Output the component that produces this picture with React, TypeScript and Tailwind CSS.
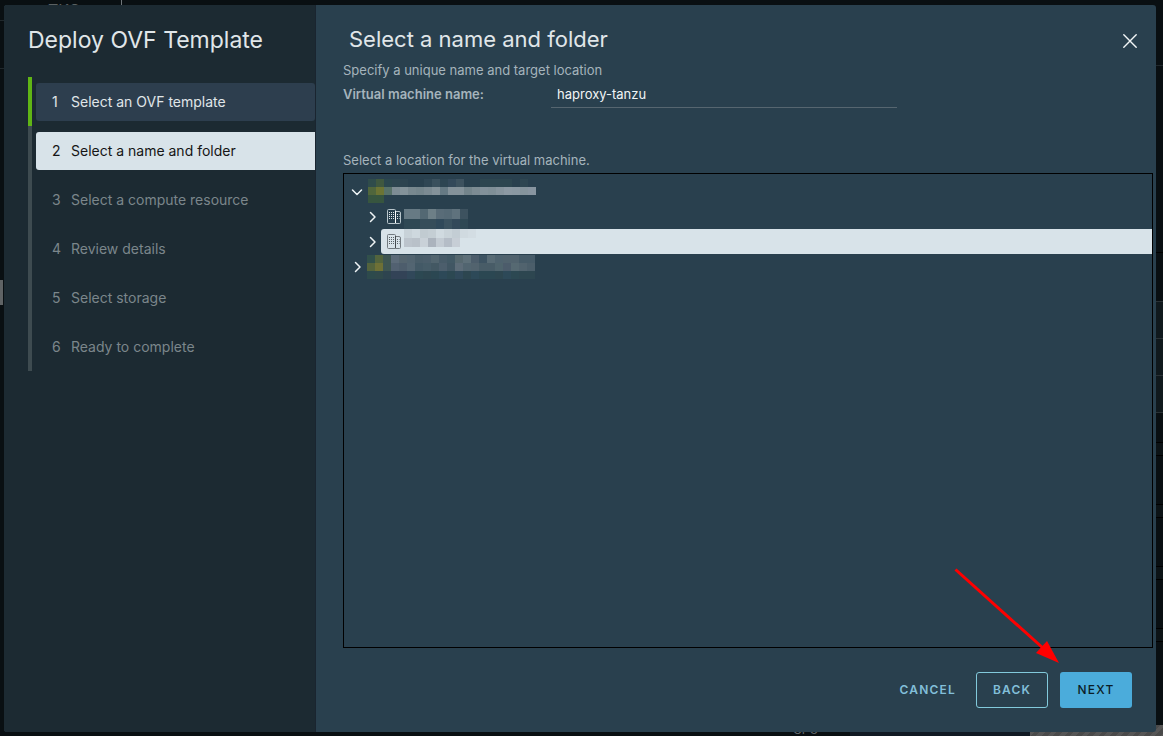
import { useState } from 'react';
import clsx from 'clsx';

const steps = [
  'Select an OVF template',
  'Select a name and folder',
  'Select a compute resource',
  'Review details',
  'Select storage',
  'Ready to complete',
];

const CURRENT = 1;

interface MosaicProps {
  /** Cell colours per row, '' leaves the cell empty */
  rows: string[][];
  cellHeight: number;
  className?: string;
}

/** Redacted label, drawn as a grid of flat cells */
function Mosaic({ rows, cellHeight, className }: MosaicProps) {
  const width = Math.max(...rows.map((r) => r.length)) * 8;
  const height = rows.length * cellHeight;
  return (
    <svg
      width={width}
      height={height}
      viewBox={`0 0 ${width} ${height}`}
      shapeRendering="crispEdges"
      className={clsx('shrink-0', className)}
      aria-hidden="true"
    >
      {rows.map((row, y) =>
        row.map((fill, x) =>
          fill ? <rect key={`${x}-${y}`} x={x * 8} y={y * cellHeight} width={8} height={cellHeight} fill={fill} /> : null,
        ),
      )}
    </svg>
  );
}

const vcenterOne = [
  ['#2f4c4b', '#3f583f', '#2b474e', '#2d4550', '#2d4450', '', '', '#2f4654', '#3a505d', '#2d4552', '#33495a', '#3d525f', '', '', '#2d4650', '#2d4650', '#2d4650', '#2d4650', '', '#2e4651'],
  ['#50663c', '#6c7434', '#577168', '#7d8c94', '#84939a', '#78888f', '#74858c', '#7b8a92', '#84929a', '#667a84', '#84929a', '#84929a', '#73848b', '#7c8b93', '#82919a', '#7f8f97', '#86949d', '#8c99a3', '#8a98a2', '#85949c', '#8895a0'],
  ['#37553f', '#37553f'],
];

const datacenterOne = [
  ['#677a84', '#677a84', '#536873', '#6d7f87', '#596c78', '#566a76', '#5f727d', '#3d525f'],
  ['#2f4854', '#2f4854', '#364d5a', '#364d5a', '#30495a', '#3b5260', '#33495a', '#2f4854'],
];

const datacenterTwo = [
  ['#c8d2d8', '#ced8de', '#c1cbd1', '#c4ced4', '#d0dae0', '#c9d3d9', '#c3cdd4', '#d0dae0', '#d3dde3'],
  ['#bcc4cc', '#b9c1c9', '#c9d1d8', '#abb3bd', '#c3cbd3', '#b5bdc7', '#c7ced6'],
];

const vcenterTwo = [
  ['#31504b', '#53643d', '#3e5552', '#5c6b79', '#55656f', '#526470', '#495d69', '#4b5e6b', '#52656f', '#475b68', '#425965', '#56686f', '#5e7079', '#4c5d6b', '#3d5362', '#586b75', '#4f636f', '#51636e', '#51636e', '#465b68', '#465b68'],
  ['#53633d', '#6e7036', '#3e5552', '#526171', '#4d5d6c', '#536572', '#435966', '#465c68', '#435863', '#4c5e6c', '#415663', '#5d6c78', '#526570', '#52636e', '#485c67', '#485c67', '#4f646d', '#4c5c6b', '#566972', '#51636e', '#4b5e6a'],
  ['#2d4a4c', '#30494b', '#2e444f', '#334357', '#334357', '#31485a', '#2c4852', '#2d4650', '#2b4752', '#2d4958', '#2c4852', '#30495a', '#2d4650', '#2d4958', '#2b4752', '#2b4752', '#2d4650', '#2d4958', '#2c4852', '#2d4650', '#2d4650'],
];

function Chevron({ open }: { open?: boolean }) {
  return (
    <svg width="12" height="12" viewBox="0 0 12 12" fill="none" stroke="#eef3f5" strokeWidth="1.5" strokeLinecap="round" strokeLinejoin="round">
      <path d={open ? 'M1.5 4 6 8.5 10.5 4' : 'M4.5 1.5 9 6 4.500 10.500'} />
    </svg>
  );
}

function DatacenterIcon({ selected }: { selected?: boolean }) {
  const line = selected ? '#737b80' : '#b9c6cc';
  return (
    <svg width="14" height="15" viewBox="0 0 14 15" fill="none" className="shrink-0">
      <path d="M8.5 14.5H1.5a1 1 0 0 1-1-1v-12a1 1 0 0 1 1-1h6a1 1 0 0 1 1 1zM8.5 2.5h3.500a1.500 1.500 0 0 1 1.500 1.500v9.500a1 1 0 0 1-1 1h-4" stroke={line} />
      <path d="M8.500 2v12" stroke={selected ? '#454b4f' : '#ffffff'} />
      <path
        d="M2 3.500h1m1 0h1m1 0h1M2 5.500h1m1 0h1m1 0h1M2 7.500h1m1 0h1m1 0h1M2 9.500h1m1 0h1m1 0h1M10 5.500h1m1 0h.5M10 7.500h1m1 0h.5M10 9.500h1m1 0h.5"
        stroke={selected ? '#5a6267' : '#e3eaed'}
      />
    </svg>
  );
}

function Backdrop() {
  return (
    <div className="absolute inset-0 overflow-hidden bg-[#090f12]" aria-hidden="true">
      <span className="absolute top-0 left-12 text-base leading-5 text-[#5a6062]">TKG</span>
      <span className="absolute top-0 left-[121px] h-2 w-px bg-[#70767a]" />
      <span className="absolute top-5 left-0 h-px w-1 bg-[#20282c]" />
      <span className="absolute top-[68px] left-0 h-px w-1 bg-[#20282c]" />
      <span className="absolute top-[280px] left-0 h-[25px] w-[3px] bg-[#5f6365]" />
      <span className="absolute top-[65px] right-0 h-px w-2 bg-[#20282c]" />
      <span className="absolute top-[252px] right-0 h-px w-2 bg-black" />
      <span className="absolute top-[301px] right-0 h-28 w-2 border-y border-[#2a3236] bg-[#10191d]" />
      <span className="absolute top-[338px] right-0 h-[38px] w-2 border-y border-[#2a3236]" />
      {['top-[442px]', 'top-[504px]', 'top-[566px]', 'top-[628px]'].map((top) => (
        <span key={top} className={clsx('absolute right-0 h-3.5 w-2 border-y border-black bg-[#0c1316]', top)} />
      ))}
      <span className="absolute right-[133px] bottom-0 h-2 w-[180px] bg-[#111a23]" />
      <span className="absolute bottom-0 left-[793px] text-xs leading-3 text-[#62676a]">CPU</span>
      <span className="absolute right-0 bottom-0 h-[11px] w-[133px] bg-[repeating-linear-gradient(135deg,#4a4a4a_0_4px,#565656_4px_8px)]" />
    </div>
  );
}

function Sidebar() {
  return (
    <aside className="w-[312px] shrink-0 border-r border-[#1a2530] bg-[#1c2a32] pt-[19px] pl-6">
      <h1 className="text-[23px] leading-8 text-[#e0e6e9]">Deploy OVF Template</h1>
      <ol className="mt-[21px]">
        {steps.map((step, i) => (
          <li
            key={step}
            className={clsx('border-l-4 pt-1.5 pb-[5px] pl-1', i < CURRENT ? 'border-[#60b515]' : 'border-[#3e4b50]')}
          >
            <button
              type="button"
              disabled={i > CURRENT}
              aria-current={i === CURRENT ? 'step' : undefined}
              className={clsx(
                'flex h-[38px] w-full items-center rounded-l-[3px] pl-4 text-left text-sm',
                i < CURRENT && 'rounded-r-[3px] bg-[#2d3e4e] text-[#e0e6e9]',
                i === CURRENT && 'bg-[#d8e3e9] text-[#151515]',
                i > CURRENT && 'text-[#7b868b]',
              )}
            >
              <span className="w-[19px]">{i + 1}</span>
              {step}
            </button>
          </li>
        ))}
      </ol>
    </aside>
  );
}

function LocationTree() {
  return (
    <ul role="tree" aria-label="Location" className="mr-[3px] flex-1 border border-black pt-[5px]">
      <li role="treeitem" aria-expanded="true">
        <div className="flex h-[25px] items-center pl-[7px]">
          <button type="button" aria-label="Collapse"><Chevron open /></button>
          <Mosaic rows={vcenterOne} cellHeight={8} className="ml-[5px] self-start" />
        </div>
        <ul role="group" className="pl-[22px]">
          <li role="treeitem" aria-expanded="false" className="flex h-[25px] items-center">
            <button type="button" aria-label="Expand"><Chevron /></button>
            <div className="ml-[3px] flex h-full flex-1 items-center pl-1.5">
              <DatacenterIcon />
              <Mosaic rows={datacenterOne} cellHeight={10} className="ml-[3px] self-end" />
            </div>
          </li>
          <li role="treeitem" aria-expanded="false" aria-selected="true" className="flex h-[25px] items-center">
            <button type="button" aria-label="Expand"><Chevron /></button>
            <div className="ml-[3px] flex h-full flex-1 items-center rounded-l-[3px] bg-[#d8e3e9] pl-1.5">
              <DatacenterIcon selected />
              <Mosaic rows={datacenterTwo} cellHeight={9} className="ml-[3px] self-start" />
            </div>
          </li>
        </ul>
      </li>
      <li role="treeitem" aria-expanded="false" className="flex h-[25px] items-center pl-[7px]">
        <button type="button" aria-label="Expand"><Chevron /></button>
        <Mosaic rows={vcenterTwo} cellHeight={8} className="ml-1" />
      </li>
    </ul>
  );
}

export default function App() {
  const [name, setName] = useState('haproxy-tanzu');

  return (
    <div className="relative flex min-h-screen pt-[5px] pr-[7px] pb-1 pl-1 font-['Inter','Open_Sans',sans-serif]">
      <Backdrop />

      <div role="dialog" aria-label="Deploy OVF Template" className="relative flex flex-1 overflow-hidden rounded-[3px] bg-[#29404e]">
        <Sidebar />

        <main className="flex min-w-0 flex-1 flex-col pt-[18px] pl-[27px] text-[13px] leading-5 text-[#a5b4bc]">
          <header className="flex items-end justify-between pr-[18px] pl-1.5">
            <h2 className="text-[22px] leading-8 text-[#e0e6e9]">Select a name and folder</h2>
            <button type="button" aria-label="Close" className="mb-1.5 p-px">
              <svg width="14" height="14" viewBox="0 0 14 14" stroke="#f2f6f7" strokeWidth="1.4" strokeLinecap="round">
                <path d="M.8.8 13.200 13.200M13.200.8.8 13.200" />
              </svg>
            </button>
          </header>

          <p className="mt-[5px]">Specify a unique name and target location</p>
          <div className="mt-1 flex h-6 items-start">
            <label htmlFor="vm-name" className="w-52 shrink-0 font-semibold">Virtual machine name:</label>
            <input
              id="vm-name"
              type="text"
              value={name}
              onChange={(e) => setName(e.target.value)}
              className="h-6 w-[346px] border-b border-[#566670] bg-transparent px-1.5 pb-1 text-[#f1f5f6] outline-none"
            />
          </div>

          <p className="mt-[42px] mb-[3px]">Select a location for the virtual machine.</p>
          <LocationTree />

          <footer className="flex items-center justify-end gap-3 pt-6 pr-6 pb-6 text-xs font-medium tracking-widest">
            <button type="button" className="h-9 px-2 font-semibold text-[#82bfd9]">CANCEL</button>
            <button type="button" className="h-9 w-[72px] rounded-[3px] border border-[#82cadb] font-semibold text-[#82bfd9]">BACK</button>
            <div className="relative">
              <button type="button" className="h-9 w-[72px] rounded-[3px] bg-[#4bacdb] text-[#0b1d27]">NEXT</button>
              {/* Pointer annotation over the dialog */}
              <svg width="106" height="96" viewBox="0 0 106 96" className="pointer-events-none absolute right-[72px] bottom-[44px]" aria-hidden="true">
                <path d="M1.500 1.500 90 81" stroke="#ff0000" strokeWidth="3" />
                <path d="M105 95 82 85 93 73z" fill="#ff0000" />
              </svg>
            </div>
          </footer>
        </main>
      </div>
    </div>
  );
}
